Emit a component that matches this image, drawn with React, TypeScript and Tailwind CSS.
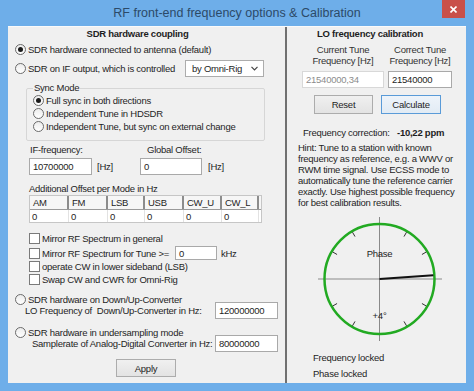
import React from 'react'

const Radio = ({checked = false}: {checked?: boolean}) => (
  <span className="flex h-[11px] w-[11px] shrink-0 items-center justify-center rounded-full border border-[#6b6b6b] bg-gradient-to-b from-[#ececec] to-white">
    {checked && <span className="h-[5px] w-[5px] rounded-full bg-[#1a1a1a]" />}
  </span>
)

const Check = () => <span className="h-[11px] w-[11px] shrink-0 border border-[#7a7a7a] bg-white" />

const Field = ({value, className = '', disabled = false}: {value: string; className?: string; disabled?: boolean}) => (
  <div
    className={`flex shrink-0 items-center bg-white pl-[3px] ${
      disabled ? 'border border-[#d8d8d8] text-[#8c8c8c]' : 'border border-[#a9a9a9]'
    } ${className}`}
  >
    {value}
  </div>
)

const modes = ['AM', 'FM', 'LSB', 'USB', 'CW_U', 'CW_L']
const colW = ['w-[39px]', 'w-[39px]', 'w-[37px]', 'w-[39px]', 'w-[38px]', 'w-[37px]']

function OffsetTable() {
  return (
    <div className="mt-[1px] ml-[21px] w-[233px] border border-[#c6c6c6] bg-white">
      <div className="flex h-[14px] border-b border-[#9a9a9a] bg-[#f6f6f6]">
        {modes.map((m, i) => (
          <div key={m} className={`${colW[i]} flex items-center border-r-2 border-[#8c8c8c] pl-[3px]`}>
            {m}
          </div>
        ))}
      </div>
      <div className="flex h-[12px]">
        {modes.map((m, i) => (
          <div key={m} className={`${colW[i]} flex items-center border-r border-[#e2e2e2] pl-[2px]`}>
            0
          </div>
        ))}
      </div>
    </div>
  )
}

function PhaseDial() {
  const cx = 92.5
  const cy = 64
  const ticks = [30, 60, 120, 150, 210, 240, 300, 330]
  const a = (4 * Math.PI) / 180
  return (
    <svg className="mt-[7px] block h-[128px] w-[179px]" viewBox="0 0 179 128">
      <line x1={31} y1={cy} x2={155} y2={cy} stroke="#8a8a8a" strokeWidth={1} />
      <line x1={cx} y1={2} x2={cx} y2={126} stroke="#8a8a8a" strokeWidth={1} />
      <circle cx={cx} cy={cy} r={55} fill="none" stroke="#22aa22" strokeWidth={2.5} />
      {ticks.map(t => {
        const r = (t * Math.PI) / 180
        return (
          <line
            key={t}
            x1={cx + 49 * Math.cos(r)}
            y1={cy - 49 * Math.sin(r)}
            x2={cx + 54 * Math.cos(r)}
            y2={cy - 54 * Math.sin(r)}
            stroke="#333"
            strokeWidth={1}
          />
        )
      })}
      <line x1={cx} y1={cy} x2={cx + 54 * Math.cos(a)} y2={cy - 54 * Math.sin(a)} stroke="#111" strokeWidth={2} />
      <text x={cx} y={42} textAnchor="middle" fontSize={9.5} letterSpacing={-0.25} fill="#1e1e1e" fontFamily="'Liberation Sans', Arial, sans-serif">
        Phase
      </text>
      <text x={cx} y={104} textAnchor="middle" fontSize={9.5} fill="#1e1e1e" fontFamily="'Liberation Sans', Arial, sans-serif">
        +4°
      </text>
    </svg>
  )
}

function CouplingPanel() {
  return (
    <div className="flex w-[279px] shrink-0 flex-col border-r-2 border-[#707070]">
      <div className="h-[13px] pr-[18px] text-center font-bold leading-[13px]">SDR hardware coupling</div>
      <div className="mt-[3px] flex h-[13px] items-center pl-[7px]">
        <Radio checked />
        <span className="ml-[2px]">SDR hardware connected to antenna (default)</span>
      </div>
      <div className="mt-[4px] flex h-[17px] items-center pl-[7px]">
        <Radio />
        <span className="ml-[2px]">SDR on IF output, which is controlled</span>
        <div className="mr-[21px] ml-auto flex h-[17px] w-[79px] items-center justify-between border border-[#acacac] bg-white pr-[5px] pl-[6px]">
          <span>by Omni-Rig</span>
          <svg width="7" height="5" viewBox="0 0 7 5">
            <path d="M0.5 0.8 L3.5 3.8 L6.5 0.8" fill="none" stroke="#444" strokeWidth={1.2} />
          </svg>
        </div>
      </div>
      <fieldset className="mt-[5px] ml-[18px] w-[239px] rounded-[2px] border border-[#d6d6d6] px-[6px] pb-[7px]">
        <legend className="h-[12px] px-[1px] leading-[12px]">Sync Mode</legend>
        <div className="flex h-[13px] items-center">
          <Radio checked />
          <span className="ml-[2px]">Full sync in both directions</span>
        </div>
        <div className="flex h-[13px] items-center">
          <Radio />
          <span className="ml-[2px]">Independent Tune in HDSDR</span>
        </div>
        <div className="flex h-[13px] items-center">
          <Radio />
          <span className="ml-[2px]">Independent Tune, but sync on external change</span>
        </div>
      </fieldset>
      <div className="mt-[2px] flex h-[12px] items-center pl-[22px]">
        <span className="w-[117px]">IF-frequency:</span>
        <span>Global Offset:</span>
      </div>
      <div className="mt-[3px] flex h-[17px] items-center pl-[21px]">
        <Field value="10700000" className="h-[17px] w-[63px]" />
        <span className="ml-[5px] w-[43px]">[Hz]</span>
        <Field value="0" className="h-[17px] w-[62px]" />
        <span className="ml-[6px]">[Hz]</span>
      </div>
      <div className="mt-[7px] flex h-[12px] items-center pl-[21px]">Additional Offset per Mode in Hz</div>
      <OffsetTable />
      <div className="mt-[9px] flex h-[13px] items-center pl-[21px]">
        <Check />
        <span className="ml-[2px]">Mirror RF Spectrum in general</span>
      </div>
      <div className="mt-[1px] flex h-[14px] items-center pl-[21px]">
        <Check />
        <span className="ml-[2px] w-[133px]">Mirror RF Spectrum for Tune &gt;=</span>
        <Field value="0" className="h-[14px] w-[42px]" />
        <span className="ml-[4px]">kHz</span>
      </div>
      <div className="flex h-[13px] items-center pl-[21px]">
        <Check />
        <span className="ml-[2px]">operate CW in lower sideband (LSB)</span>
      </div>
      <div className="flex h-[13px] items-center pl-[21px]">
        <Check />
        <span className="ml-[2px]">Swap CW and CWR for Omni-Rig</span>
      </div>
      <div className="mt-[8px] flex h-[10px] items-center pl-[7px]">
        <Radio />
        <span className="ml-[2px]">SDR hardware on Down/Up-Converter</span>
      </div>
      <div className="-mt-[2px] flex h-[17px] items-center pl-[17px]">
        <span className="w-[190px] whitespace-pre">LO Frequency of  Down/Up-Converter in Hz:</span>
        <Field value="120000000" className="h-[17px] w-[63px]" />
      </div>
      <div className="mt-[8px] flex h-[10px] items-center pl-[7px]">
        <Radio />
        <span className="ml-[2px]">SDR hardware in undersampling mode</span>
      </div>
      <div className="-mt-[2px] flex h-[17px] items-center pl-[24px]">
        <span className="w-[183px]">Samplerate of Analog-Digital Converter in Hz:</span>
        <Field value="80000000" className="h-[17px] w-[63px]" />
      </div>
      <button className="mt-[7px] ml-[108px] flex h-[18px] w-[60px] items-center justify-center border border-[#acacac] bg-gradient-to-b from-[#f0f0f0] to-[#e3e3e3]">
        Apply
      </button>
    </div>
  )
}

function CalibrationPanel() {
  return (
    <div className="flex w-[179px] shrink-0 flex-col">
      <div className="h-[13px] pr-[13px] text-center font-bold leading-[13px]">LO frequency calibration</div>
      <div className="mt-[4px] flex leading-[11px]">
        <div className="ml-[15px] w-[82px] text-center text-[#333]">
          Current Tune
          <br />
          Frequency [Hz]
        </div>
        <div className="ml-[4px] w-[64px] text-center text-[#333]">
          Correct Tune
          <br />
          Frequency [Hz]
        </div>
      </div>
      <div className="mt-[5px] flex pl-[15px]">
        <Field value="21540000,34" disabled className="h-[17px] w-[82px]" />
        <Field value="21540000" className="ml-[4px] h-[17px] w-[64px]" />
      </div>
      <div className="mt-[7px] flex">
        <button className="ml-[27px] flex h-[19px] w-[59px] items-center justify-center border border-[#acacac] bg-gradient-to-b from-[#f0f0f0] to-[#e3e3e3]">
          Reset
        </button>
        <button className="ml-[8px] flex h-[19px] w-[60px] items-center justify-center border border-[#5a9bd8] bg-gradient-to-b from-[#eef4fa] to-[#e2ebf4]">
          Calculate
        </button>
      </div>
      <div className="mt-[12px] flex h-[12px] items-center pl-[16px]">
        <span className="w-[94px]">Frequency correction:</span>
        <span className="font-bold">-10,22 ppm</span>
      </div>
      <div className="mt-[4px] pl-[11px] leading-[11px]">
        Hint: Tune to a station with known
        <br />
        frequency as reference, e.g. a WWV or
        <br />
        RWM time signal. Use ECSS mode to
        <br />
        automatically tune the reference carrier
        <br />
        exactly. Use highest possible frequency
        <br />
        for best calibration results.
      </div>
      <PhaseDial />
      <div className="mt-[8px] flex h-[12px] items-center pl-[26px]">Frequency locked</div>
      <div className="mt-[4px] flex h-[12px] items-center pl-[26px]">Phase locked</div>
    </div>
  )
}

export default function App() {
  return (
    <div className="h-[391px] w-[474px] overflow-hidden bg-[#6eaee9] font-['Liberation_Sans',Arial,sans-serif] text-[9.5px] leading-[13px] tracking-[-0.25px] whitespace-nowrap text-[#1e1e1e]">
      <div className="relative flex h-[26px] items-center justify-center text-[12.5px] tracking-normal text-[#2c4a68]">
        RF front-end frequency options &amp; Calibration
        <div className="absolute top-0 right-[9px] flex h-[18px] w-[23px] items-center justify-center bg-[#c9504a]">
          <svg width="7" height="7" viewBox="0 0 7 7">
            <path d="M0.5 0.5 L6.5 6.5 M6.5 0.5 L0.5 6.5" stroke="#fff" strokeWidth={1.6} />
          </svg>
        </div>
      </div>
      <div className="mx-[8px] flex h-[357px] border-t border-[#fafafa] bg-[#f0f0f0]">
        <CouplingPanel />
        <CalibrationPanel />
      </div>
    </div>
  )
}
